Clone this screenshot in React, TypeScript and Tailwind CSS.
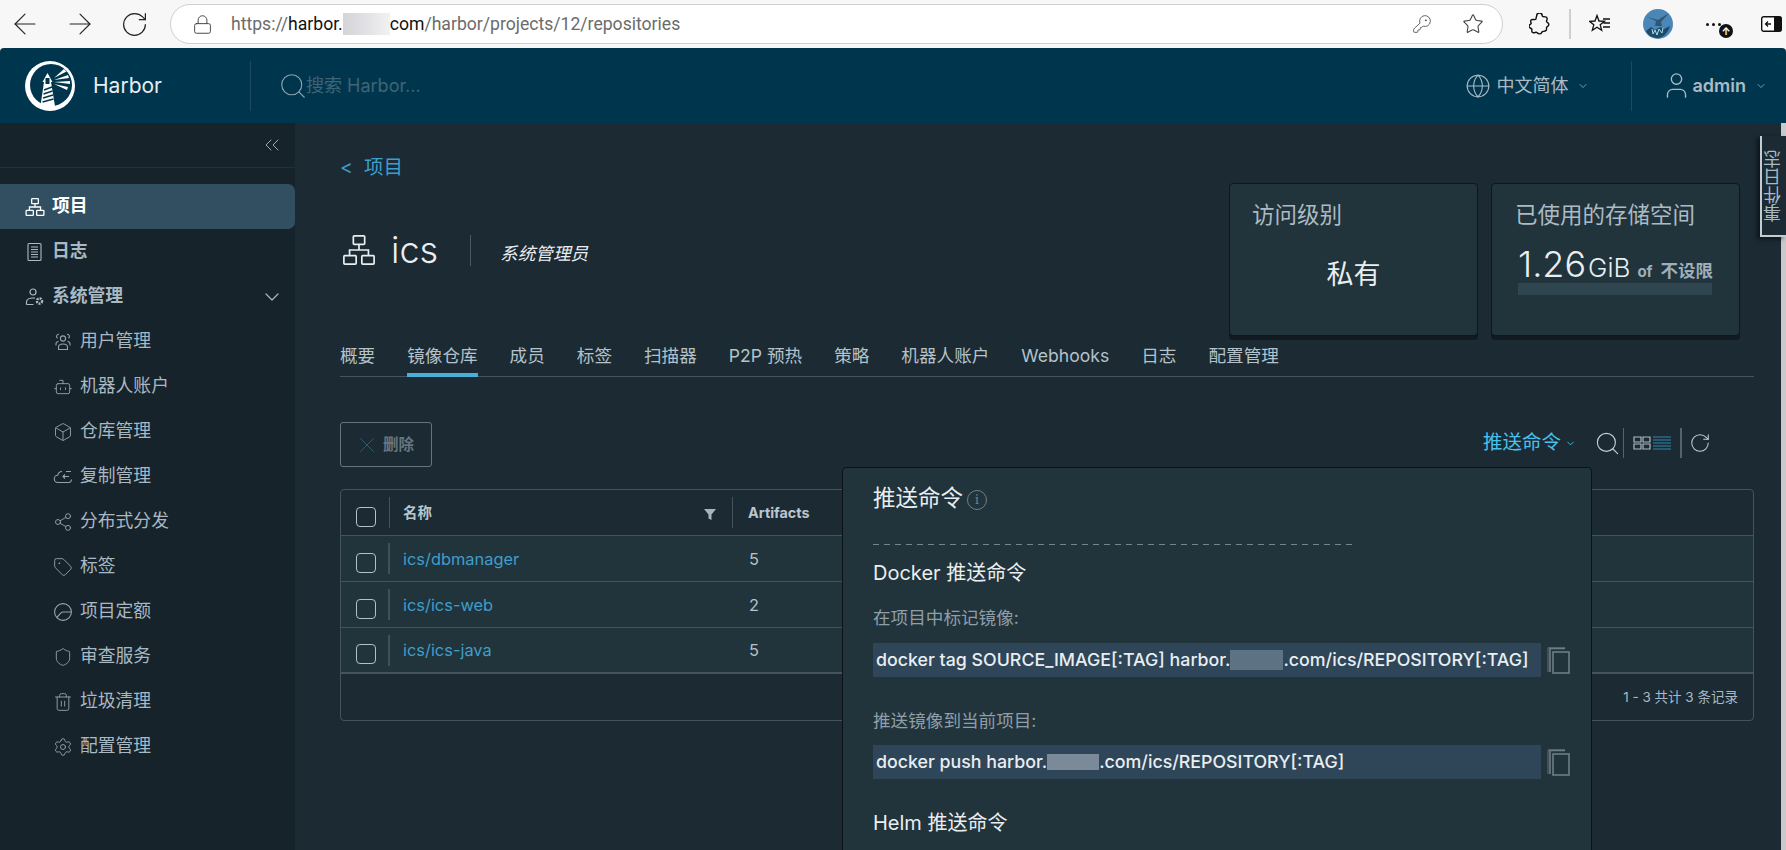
import React from "react";
import { Bot, Box, Share2, Tag, Shield, Trash2, Settings, Search, Globe, User, ChevronDown, ChevronsLeft, X, RotateCw, ArrowLeft, ArrowRight, Lock, KeyRound, Star } from "lucide-react";

const Org = ({ s = 20, w = 1.3 }: { s?: number; w?: number }) => (
  <svg width={s} height={s} viewBox="0 0 36 36" fill="none" stroke="currentColor" strokeWidth={w * 1.8}>
    <rect x="12" y="3" width="12" height="9" rx="1" />
    <rect x="2" y="24" width="13" height="9" rx="1" />
    <rect x="21" y="24" width="13" height="9" rx="1" />
    <path d="M18 12v6M8 24v-6h20v6" />
  </svg>
);
const Log = () => (
  <svg width="20" height="20" viewBox="0 0 20 20" fill="none" stroke="currentColor" strokeWidth="1.1">
    <rect x="3" y="1.5" width="13" height="17" rx="1" />
    <path d="M6 5h7M6 7.5h7M6 10h7M6 12.5h7M6 15h7" />
  </svg>
);
const UserAdmin = () => (
  <svg width="20" height="20" viewBox="0 0 20 20" fill="none" stroke="currentColor" strokeWidth="1.2">
    <circle cx="8" cy="5" r="3" />
    <path d="M1.5 17.5v-2.5c0-2.500 3-4 6.500-4 .7 0 1.300 0 2 .2M1.500 17.500h7" />
    <circle cx="14.5" cy="14" r="2.6" strokeWidth="2.4" strokeDasharray="2 1" />
  </svg>
);
const People = ({ size = 20, className = "" }: { size?: number; strokeWidth?: number; className?: string }) => (
  <svg width={size} height={size} viewBox="0 0 20 20" fill="none" stroke="currentColor" strokeWidth="1.1" className={className}>
    <circle cx="10" cy="6.500" r="2.600" />
    <path d="M5.500 17.500v-2.500c0-2 2-3 4.500-3s4.500 1 4.500 3v2.500z" />
    <path d="M6 2.200a2.200 2.200 0 0 0-1.500 4M14 2.200a2.200 2.200 0 0 1 1.500 4M3 13.500v-1.500c0-1.500 1-2.500 2.500-2.800M17 13.500v-1.500c0-1.500-1-2.500-2.500-2.800" />
  </svg>
);
const CloudSync = ({ size = 20, className = "" }: { size?: number; strokeWidth?: number; className?: string }) => (
  <svg width={size} height={size} viewBox="0 0 20 20" fill="none" stroke="currentColor" strokeWidth="1.1" className={className}>
    <path d="M9 4.500A4.500 4.500 0 0 0 4.700 8.300 3.600 3.600 0 0 0 5 15.500h10a3 3 0 0 0 3.500-3" />
    <path d="M10 9.500h6M12 7.500l-2 2 2 2M13 4.500h5" />
  </svg>
);
const Quota = ({ size = 20, className = "" }: { size?: number; strokeWidth?: number; className?: string }) => (
  <svg width={size} height={size} viewBox="0 0 20 20" fill="none" stroke="currentColor" strokeWidth="1.1" className={className}>
    <circle cx="10" cy="10" r="8.400" />
    <path d="M3.800 15.500 8 11c.5-.6 1.200-1 2-1h8.400" />
  </svg>
);
const Copy = () => (
  <svg width="23" height="27" viewBox="0 0 23 27" fill="none" stroke="#6f7d86" strokeWidth="1.6">
    <rect x="6" y="5" width="16" height="21" />
    <path d="M3 25V1.500h15" />
    <path d="M1 25V.8h17" strokeWidth="0.8" />
  </svg>
);
const Logo = () => (
  <svg width="50" height="50" viewBox="0 0 50 50">
    <circle cx="25" cy="25" r="25" fill="#fff" />
    <circle cx="26" cy="24" r="21" fill="#00364d" />
    <path d="M15 48 19 21h-1.500l5-9 5 9H26l4 24z" fill="#fff" />
    <rect x="20.500" y="17" width="4" height="6" fill="#00364d" />
    <path d="M19 29l8-3M18.500 33l9-3M18 37l10-3M17.500 41l11-3" stroke="#00364d" strokeWidth="1.400" />
    <path d="M29 17 39 8l2.500 2.500zM29 19l14-5 1 3zM29 21l16-1v3zM29 23l14 3-1 3z" fill="#fff" />
  </svg>
);

const sub = [
  [People, "用户管理"],
  [Bot, "机器人账户"],
  [Box, "仓库管理"],
  [CloudSync, "复制管理"],
  [Share2, "分布式分发"],
  [Tag, "标签"],
  [Quota, "项目定额"],
  [Shield, "审查服务"],
  [Trash2, "垃圾清理"],
  [Settings, "配置管理"],
] as const;

const tabs = ["概要", "镜像仓库", "成员", "标签", "扫描器", "P2P 预热", "策略", "机器人账户", "Webhooks", "日志", "配置管理"];
const rows = [["ics/dbmanager", "5"], ["ics/ics-web", "2"], ["ics/ics-java", "5"]];

const Check = () => <span className="ml-[2px] mt-[17px] block h-[20px] w-[20px] rounded-[4px] border border-[#b4c0c7]" />;

export default function App() {
  return (
    <div className="flex h-[850px] w-[1786px] flex-col overflow-hidden bg-[#f7f7f7] [font-family:Inter,'Noto_Sans_CJK_SC',sans-serif]">
      {/* browser chrome */}
      <div className="flex h-[48px] shrink-0 items-center text-[#222]">
        <div className="flex w-[170px] items-center pl-[8px]">
          <ArrowLeft size={34} strokeWidth={0.8} />
          <ArrowRight size={34} strokeWidth={0.8} className="ml-[21px]" />
          <RotateCw size={29} strokeWidth={1} className="ml-[23px]" />
        </div>
        <div className="flex h-[40px] w-[1333px] items-center rounded-full border border-[#cfcfcf] bg-white pl-[21px] pr-[18px]">
          <Lock size={21} strokeWidth={1.1} className="text-[#444]" />
          <span className="ml-[18px] flex items-center text-[17.600px] text-[#6b6b6b] [font-family:Roboto,sans-serif]">
            https://<span className="text-[#111]">harbor.</span>
            <span className="h-[22px] w-[47px] bg-gradient-to-r from-[#d4d4d9] via-[#e2e2e5] to-[#f2f2f3]" />
            <span className="text-[#111]">com</span>/harbor/projects/12/repositories
          </span>
          <span className="ml-auto flex items-center gap-[30px] text-[#444]">
            <KeyRound size={20} strokeWidth={1} />
            <Star size={22} strokeWidth={1.2} />
          </span>
        </div>
        <div className="relative flex flex-1 items-center">
          <svg className="ml-[26px]" width="22" height="22" viewBox="0 0 20 20" fill="none" stroke="#111" strokeWidth="1.3">
            <path d="M7 2.500a2.500 2.500 0 0 1 5 0c0 1 2 1 3 1s1.500 1 1.500 2-1 1.500-.5 2.500 2 .8 2 2.500-1.500 1.800-2 2.500.5 2-.5 3-3 .5-3.500 1-.5 2-2.500 2-2-1.500-3-1.500-2.500 1-3.500 0 0-2.500-.5-3-2.500-.8-2.500-2.500 2-2 2-2.500-1-2-.2-3 2.500-.5 3.500-.5 1.200-.5 1.200-1.500z" />
          </svg>
          <span className="ml-[18px] h-[30px] w-[2px] bg-[#cfcfcf]" />
          <svg className="ml-[18px]" width="22" height="20" viewBox="0 0 22 20" fill="none" stroke="#111" strokeWidth="1.3">
            <path d="M8 1.500 10 7l5.500.3-4.300 3.500 1.500 5.500L8 13.200l-4.700 3.100 1.500-5.500L.5 7.300 6 7zM14 5h7M14.500 9H21M14 13h7" />
          </svg>
          <svg className="ml-[32px]" width="30" height="30" viewBox="0 0 30 30">
            <circle cx="15" cy="15" r="15" fill="#4a86b8" />
            <path d="M4 8l11 3L26 4l-8 9 1 4h-7l1-5z" fill="#33566f" />
            <path d="M3 22l5-4 4 3 5-3 4 2 6-3c-2 7-7 12-12 12S5 27 3 22z" fill="#1f4a66" />
            <path d="M9 20l1 5 2-4 2 5 2-6 3 4 1-5" stroke="#a9dcee" fill="none" />
          </svg>
          <span className="ml-[33px] flex gap-[3px]">
            <i className="h-[3px] w-[3px] rounded-full bg-[#111]" />
            <i className="h-[3px] w-[3px] rounded-full bg-[#111]" />
            <i className="h-[3px] w-[3px] rounded-full bg-[#111]" />
          </span>
          <span className="absolute left-[216px] top-[15px] flex h-[14px] w-[14px] items-center justify-center rounded-full bg-[#111] text-[10px] font-bold leading-none text-white">↑</span>
          <svg className="ml-[40px]" width="21" height="16" viewBox="0 0 21 16">
            <rect x="0.7" y="0.7" width="19.6" height="14.6" rx="2" fill="#fff" stroke="#111" strokeWidth="1.400" />
            <rect x="13" y="0.7" width="7.3" height="14.6" rx="1" fill="#111" />
            <path d="M10 8H4.500M7 5.500 4.500 8 7 10.500" fill="none" stroke="#111" strokeWidth="1.300" />
          </svg>
        </div>
      </div>

      {/* Harbor header */}
      <div className="flex h-[75px] shrink-0 items-center rounded-t-[4px] bg-[#00364d] text-[#acbac3]">
        <div className="flex h-[50px] w-[251px] items-center border-r border-[#1d4a5e] pl-[25px]">
          <Logo />
          <span className="ml-[18px] text-[21px] text-[#e8eef1]">Harbor</span>
        </div>
        <div className="ml-[27px] flex items-center text-[#3f6477]">
          <Search size={30} strokeWidth={0.9} className="-mr-[2px] text-[#8da3af]" />
          <span className="text-[18px]">搜索 Harbor...</span>
        </div>
        <div className="ml-auto flex items-center">
          <Globe size={26} strokeWidth={1} />
          <span className="ml-[6px] text-[18px]">中文简体</span>
          <ChevronDown size={12} strokeWidth={1.500} className="ml-[8px]" />
          <span className="ml-[42px] h-[50px] w-px bg-[#1d4a5e]" />
          <User size={31} strokeWidth={1.050} className="ml-[29px]" />
          <span className="ml-[1px] text-[18px] font-semibold">admin</span>
          <ChevronDown size={12} strokeWidth={1.500} className="ml-[9px] mr-[19px]" />
        </div>
      </div>

      {/* body */}
      <div className="relative flex min-h-0 flex-1">
        <aside className="flex w-[295px] shrink-0 flex-col bg-[#17232b] text-[#a9b9c4]">
          <div className="flex h-[45px] items-center justify-end border-b border-[#22303a] pr-[11px]">
            <ChevronsLeft size={24} strokeWidth={0.9} />
          </div>
          <div className="mt-[16px]">
            <div className="flex h-[45px] items-center gap-[7px] rounded-r-[7px] bg-[#324f61] pl-[25px] text-[17.800px] font-bold text-white">
              <Org />
              项目
            </div>
            <div className="flex h-[45px] items-center gap-[7px] pl-[25px] text-[17.800px] font-bold">
              <Log />
              日志
            </div>
            <div className="flex h-[45px] items-center gap-[7px] pl-[25px] pr-[11px] text-[17.800px] font-bold">
              <UserAdmin />
              系统管理
              <ChevronDown size={24} strokeWidth={1.200} className="ml-auto" />
            </div>
            {sub.map(([I, t]) => (
              <div key={t} className="flex h-[45px] items-center gap-[7px] pl-[53px] text-[17.800px]">
                <I size={20} strokeWidth={1.100} className="text-[#93a3ad]" />
                {t}
              </div>
            ))}
          </div>
        </aside>

        <main className="relative min-w-0 flex-1 overflow-hidden bg-[#1b2a33] pl-[45px] pr-[27px] pt-[32px]">
          <div className="flex h-[181px]">
            <div>
              <div className="flex h-[26px] items-center text-[19.500px] text-[#3f9ecb]">
                <span className="w-[24px]">&lt;</span>
                项目
              </div>
              <div className="ml-[2px] mt-[50px] flex items-center text-[#eaeef0]">
                <Org s={34} w={1} />
                <span className="ml-[15px] text-[36px] font-light leading-[38px]">ics</span>
                <span className="ml-[32px] h-[31px] w-px bg-[#4a5a65]" />
                <span className="ml-[29px] mt-[8px] text-[17.600px] italic">系统管理员</span>
              </div>
            </div>
            <div className="ml-auto mr-[14px] mt-[28px] flex gap-[13px]">
              <div className="h-[153px] w-[249px] rounded-[4px] border border-[#0f171c] bg-[#21333b] px-[22px] pt-[14px] shadow-[0_4px_0_#101a20]">
                <div className="text-[22.500px] text-[#acbac3]">访问级别</div>
                <div className="mt-[23px] text-center text-[27px] text-[#eaeef0]">私有</div>
              </div>
              <div className="h-[153px] w-[249px] rounded-[4px] border border-[#0f171c] bg-[#21333b] pl-[23px] pr-[27px] pt-[14px] shadow-[0_4px_0_#101a20]">
                <div className="text-[22.500px] text-[#acbac3]">已使用的存储空间</div>
                <div className="ml-[3px] mt-[5px] flex h-[45px] items-baseline whitespace-nowrap text-[#eaeef0]">
                  <span className="text-[36px] font-light">1.26</span>
                  <span className="ml-[2px] text-[26px] font-light">GiB</span>
                  <span className="ml-[7px] text-[15px] font-bold text-[#9fafb9]">of</span>
                  <span className="ml-[8px] text-[17.500px] font-bold text-[#9fafb9]">不设限</span>
                </div>
                <div className="ml-[3px] mt-[1px] h-[12px] w-[194px] bg-[#2f4550]" />
              </div>
            </div>
          </div>

          <nav className="flex h-[41px] items-center gap-[32px] border-b border-[#46555f] text-[17.600px] text-[#b4c2cb]">
            {tabs.map((t) => (
              <span key={t} className={t === "镜像仓库" ? "-mb-px flex h-[41px] items-center border-b-4 border-[#49afd9] pt-[3px]" : "flex h-[41px] items-center"}>
                {t}
              </span>
            ))}
          </nav>

          <div className="mt-[45px] flex items-center justify-between pr-[43px]">
            <button className="flex h-[45px] w-[92px] items-center gap-[3px] rounded-[3px] border border-[#65747e] pl-[13px] text-[15.500px] font-semibold text-[#66757f]">
              <X size={26} strokeWidth={0.7} className="text-[#2f6b84]" />
              删除
            </button>
            <div className="-mt-[3px] flex items-center">
              <span className="text-[19.500px] text-[#49c0ec]">推送命令</span>
              <ChevronDown size={11} strokeWidth={2} className="ml-[4px] text-[#49c0ec]" />
              <Search size={27} strokeWidth={1} className="ml-[18px] text-[#c4cfd5]" />
              <span className="ml-[2px] h-[30px] w-px bg-[#54636d]" />
              <svg className="ml-[9px]" width="38" height="14" viewBox="0 0 38 14" fill="none" strokeWidth="1.200">
                <path d="M1 1h7v5H1zM10 1h7v5h-7zM1 8h7v5H1zM10 8h7v5h-7z" stroke="#aebbc3" />
                <path d="M20 1h18M20 4h18M20 7h18M20 10h18M20 13h18" stroke="#2f88ac" />
              </svg>
              <span className="ml-[9px] h-[30px] w-[2px] bg-[#54636d]" />
              <RotateCw size={22} strokeWidth={1.100} className="ml-[7px] text-[#c4cfd5]" />
            </div>
          </div>

          <div className="mt-[22px] h-[232px] overflow-hidden rounded-[4px] border border-[#44545f]">
            <div className="flex h-[46px] items-center border-b border-[#44545f] text-[14.400px] font-bold text-[#b9c6ce]">
              <div className="flex h-[46px] w-[48px] justify-center"><Check /></div>
              <div className="flex h-[31px] w-[344px] items-center border-x border-[#44545f] pl-[13px] pr-[16px]">
                名称
                <svg className="ml-auto mt-[4px]" width="12" height="11" viewBox="0 0 12 11"><path d="M0 0h12L7.500 5.500V11l-3-1.500v-4z" fill="#aab3b8" /></svg>
              </div>
              <div className="pl-[15px]">Artifacts</div>
            </div>
            {rows.map(([n, c], i) => (
              <div key={n} className={`flex h-[46px] items-center bg-[#21333b] text-[16.400px] ${i === 2 ? "border-b-2" : "border-b"} border-[#44545f]`}>
                <div className="flex h-[46px] w-[47px] justify-center"><Check /></div>
                <div className="flex h-[31px] w-[345px] items-center border-l-2 border-[#3e505c] pl-[13px] pt-[1px] text-[#3f9ecb]">{n}</div>
                <div className="pl-[16px] pt-[1px] text-[#b4c2cb]">{c}</div>
              </div>
            ))}
            <div className="flex h-[46px] items-center justify-end pr-[15px] text-[13.500px] text-[#a9b9c4]">1 - 3 共计 3 条记录</div>
          </div>

          {/* push command popover */}
          <div className="absolute left-[547px] top-[344px] h-[400px] w-[750px] rounded-t-[4px] border border-[#0c1216] bg-[#21333b] pl-[30px] pt-[15px]">
            <div className="flex h-[30px] items-center text-[22.500px] text-[#eaeef0]">
              推送命令
              <span className="ml-[4px] mt-[3px] flex h-[20px] w-[20px] items-center justify-center rounded-full border-[1.500px] border-[#70808a] font-serif text-[14px] text-[#70808a]">i</span>
            </div>
            <div className="mt-[31px] h-px w-[481px] bg-[repeating-linear-gradient(90deg,#75848d_0,#75848d_6px,transparent_6px,transparent_11px)]" />
            <div className="mt-[15px] h-[26px] text-[20px] leading-[26px] text-[#eaeef0]">Docker 推送命令</div>
            <div className="mt-[20px] h-[24px] text-[17.600px] leading-[24px] text-[#8f9ea7]">在项目中标记镜像:</div>
            <div className="mt-[13px] flex items-center gap-[6px]">
              <div className="flex h-[34px] w-[668px] items-center whitespace-nowrap bg-[#2f4558] pl-[3px] text-[17.800px] font-medium text-[#e8eef1]">
                docker tag SOURCE_IMAGE[:TAG] harbor.
                <span className="h-[20px] w-[53px] bg-[#5d7283]" />
                .com/ics/REPOSITORY[:TAG]
              </div>
              <Copy />
            </div>
            <div className="mt-[32px] h-[24px] text-[17.600px] leading-[24px] text-[#8f9ea7]">推送镜像到当前项目:</div>
            <div className="mt-[12px] flex items-center gap-[6px]">
              <div className="flex h-[34px] w-[668px] items-center whitespace-nowrap bg-[#2f4558] pl-[3px] text-[17.800px] font-medium text-[#e8eef1]">
                docker push harbor.
                <span className="h-[16px] w-[52px] bg-[#7a8a98]" />
                .com/ics/REPOSITORY[:TAG]
              </div>
              <Copy />
            </div>
            <div className="mt-[31px] h-[26px] text-[20px] leading-[26px] text-[#eaeef0]">Helm 推送命令</div>
          </div>
        </main>
        <div className="w-[5px] shrink-0 bg-[#c9c9c9]" />

        {/* event log side tab */}
        <div className="absolute right-0 top-[13px] flex h-[101px] w-[26px] items-center justify-center border-b-2 border-l-2 border-[#c2ccd1] bg-[#1b2a33] text-[18px] text-[#a9b9c4] shadow-[-3px_2px_4px_rgba(0,0,0,0.5)]">
          <span className="rotate-180 leading-none [writing-mode:vertical-rl]">事件日志</span>
        </div>
      </div>
    </div>
  );
}
